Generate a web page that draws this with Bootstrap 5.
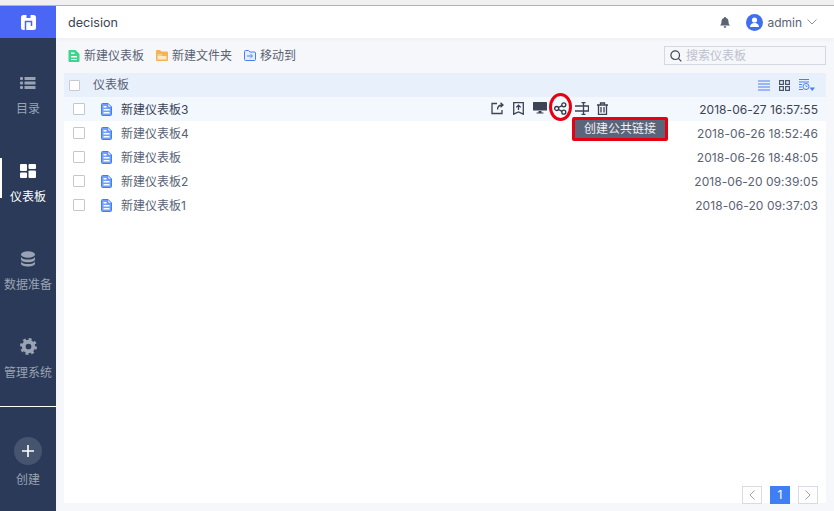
<!DOCTYPE html>
<html lang="zh">
<head>
<meta charset="utf-8">
<title>decision</title>
<link href="https://cdn.jsdelivr.net/npm/bootstrap@5.3.0/dist/css/bootstrap.min.css" rel="stylesheet">
<style>
html,body{height:100%;overflow:hidden}
body{background:#f5f7fa;font-family:Inter,"Noto Sans CJK SC",sans-serif;font-size:12px;color:#4a5468}
.chrome{height:6px;background:#f0f0f0;border-bottom:1px solid #b4b4b4}
.shell{height:505px}
.side{width:56px;background:#2b3a58;color:#9aa3b3}
.logo{height:32px;background:#4a66f5}
.nav-it{height:88px;padding-top:38px;position:relative;font-size:12px;line-height:18px}
.nav-it svg{display:block;margin-bottom:10px}
.nav-it svg.tall-a{margin-top:-1px;margin-bottom:9px}
.nav-it svg.tall-b{margin-top:-2px;margin-bottom:9px}
.nav-it.on{color:#fff}
.nav-it.on::before{content:"";position:absolute;left:0;top:32px;width:2px;height:40px;background:#fff}
.side-line{border-top:1px solid #fff;margin-top:16px}
.create{padding-top:30px;line-height:18px}
.plus{width:28px;height:28px;border-radius:50%;background:#47546f;margin-bottom:6px}
.topbar{height:32px;background:#fff;padding:0 17px 0 12px;box-shadow:0 1px 4px rgba(60,80,120,.06)}
.app-name{font-size:12.6px;color:#3c4354;margin-top:2px}
.admin{color:#5a6274;font-size:12px;margin-right:5px;margin-top:1px}
.avatar{width:17px;height:17px;border-radius:50%;background:#3f6ff0}
.tools{height:35px;padding:0 8px 0 12px;gap:12px}
.tool{color:#5a6274;font-size:12px}
.search{width:162px;height:19px;border:1px solid #d4d8e2;padding-left:5px;color:#bcc2ce;font-size:12px;line-height:17px}
.panel{margin:0 8px;height:430px;background:#fff;position:relative}
.head{height:24px;background:#e8f0fb;color:#5a6274;padding:0 11px 0 5px}
.head-gap{margin-right:9px}
.box{width:11px;height:11px;border:1px solid #c6cad3;background:#fff;flex:none;border-radius:1px}
.box-head{margin-right:13px}
.box-l{width:12px;height:12px;border-color:#c3c7d0;margin-left:9px}
.rowi{height:24px;color:#5a6274}
.rowi.hov{background:#f3f7fe;color:#3c4354}
.doc{margin-left:16px;margin-right:9px;flex:none}
.lbl{margin-top:2px}
.stamp{margin-left:auto;margin-right:8px;margin-top:2px;color:#5a6274;font-size:12px;letter-spacing:.05px;white-space:nowrap}
.hov .stamp{color:#3c4354}
.acts{position:absolute;left:423px;top:23px;height:24px}
.act{width:21px}
.ring{position:absolute;left:485px;top:20px;width:23px;height:28px;border:3px solid #e60012;border-radius:50%;pointer-events:none}
.tipbox{position:absolute;left:508px;top:44px;width:96px;height:24px;border:3px solid #e60012;border-radius:2px;background:#fff}
.tipin{background:#5b6579;color:#eef0f4;height:100%;text-align:center;font-size:12px;line-height:18px}
.pager{position:absolute;right:8px;bottom:-1px;gap:8px}
.pg{width:20px;height:18px;border:1px solid #d8dbe3;background:#fff;color:#9aa1b0}
.pg.cur{background:#3f7ff5;border-color:#3f7ff5;color:#fff;font-size:12px;line-height:1}
</style>
</head>
<body>
<div class="chrome"></div>
<div class="shell d-flex">
  <aside class="side d-flex flex-column flex-shrink-0">
    <div class="logo d-flex align-items-center justify-content-center">
      <svg width="15" height="15" viewBox="0 0 15 15"><rect width="15" height="15" rx="2.500" fill="#fff"/><path d="M5.500 0h4v3h-4z" fill="#4a66f5"/><path d="M4.500 15V6.500h6V11" fill="none" stroke="#4a66f5" stroke-width="1.500"/></svg>
    </div>
    <div class="nav-it d-flex flex-column align-items-center">
      <svg width="16" height="14" viewBox="0 0 16 14" fill="#9aa3b3"><rect x="0" y="1" width="3" height="3" rx="1"/><rect x="4.500" y="1" width="11" height="3" rx=".5"/><rect x="0" y="5.500" width="3" height="3" rx="1"/><rect x="4.500" y="5.500" width="11" height="3" rx=".5"/><rect x="0" y="10" width="3" height="3" rx="1"/><rect x="4.500" y="10" width="11" height="3" rx=".5"/></svg>
      <span>目录</span>
    </div>
    <div class="nav-it on d-flex flex-column align-items-center">
      <svg width="16" height="14" viewBox="0 0 16 14" fill="#fff"><rect x="0" y="0" width="7" height="7" rx="1"/><rect x="8.500" y="0" width="7.500" height="5" rx="1"/><rect x="0" y="8.500" width="7" height="5.500" rx="1"/><rect x="8.500" y="6.500" width="7.500" height="7.500" rx="1"/></svg>
      <span>仪表板</span>
    </div>
    <div class="nav-it d-flex flex-column align-items-center">
      <svg class="tall-a" width="16" height="16" viewBox="0 0 16 16" fill="#9aa3b3"><ellipse cx="8" cy="3.500" rx="7" ry="3.200"/><path d="M1 6c1 1.800 3.500 2.600 7 2.600S14 7.800 15 6v2.200c0 1.800-3 3-7 3s-7-1.200-7-3z"/><path d="M1 10.500c1 1.800 3.500 2.600 7 2.600s6-.8 7-2.600v2c0 1.800-3 3-7 3s-7-1.200-7-3z"/></svg>
      <span>数据准备</span>
    </div>
    <div class="nav-it d-flex flex-column align-items-center">
      <svg class="tall-b" width="17" height="17" viewBox="0 0 16 16" fill="none" stroke="#9aa3b3"><circle cx="8" cy="8" r="4.500" stroke-width="3.600"/><circle cx="8" cy="8" r="6.500" stroke-width="3" stroke-dasharray="2.600 2.500"/></svg>
      <span>管理系统</span>
    </div>
    <div class="side-line"></div>
    <div class="create d-flex flex-column align-items-center">
      <div class="plus d-flex align-items-center justify-content-center">
        <svg width="12" height="12" viewBox="0 0 12 12" stroke="#fff" stroke-width="1.600"><path d="M6 0v12M0 6h12"/></svg>
      </div>
      <span>创建</span>
    </div>
  </aside>
  <main class="flex-grow-1 d-flex flex-column">
    <header class="topbar d-flex align-items-center">
      <span class="app-name">decision</span>
      <svg class="ms-auto me-3" width="10" height="11" viewBox="0 0 10 11" fill="#5a6274"><path d="M5 0c.6 0 1 .4 1 1 1.700.4 2.500 1.800 2.500 3.500 0 2 .6 3 1.500 4H0c.9-1 1.500-2 1.500-4C1.500 2.800 2.300 1.400 4 1c0-.6.4-1 1-1zM3.700 9.300h2.600C6.200 10.200 5.700 11 5 11s-1.200-.8-1.300-1.700z"/></svg>
      <div class="avatar d-flex align-items-center justify-content-center me-1">
        <svg width="9" height="10" viewBox="0 0 9 10" fill="#fff"><circle cx="4.500" cy="3" r="2.600"/><path d="M0 10c0-2.800 2-4 4.500-4S9 7.200 9 10z"/></svg>
      </div>
      <span class="admin">admin</span>
      <svg width="10" height="6" viewBox="0 0 10 6" fill="none" stroke="#8a92a2"><path d="M.5.500 5 5 9.500.5"/></svg>
    </header>
    <div class="tools d-flex align-items-center">
      <span class="tool d-flex align-items-center">
        <svg class="me-1" width="12" height="12" viewBox="0 0 11 12"><path d="M0 1a1 1 0 0 1 1-1h6l4 4v7a1 1 0 0 1-1 1H1a1 1 0 0 1-1-1z" fill="#3fd48c"/><path d="M2.500 6h6v1.500h-6zM2.500 9h6v1h-6zM2.500 2.500h3.500V4H2.500z" fill="#fff"/></svg>新建仪表板</span>
      <span class="tool d-flex align-items-center">
        <svg class="me-1" width="12" height="11" viewBox="0 0 12 11"><path d="M0 1a1 1 0 0 1 1-1h3l1.500 1.500H11a1 1 0 0 1 1 1V10a1 1 0 0 1-1 1H1a1 1 0 0 1-1-1z" fill="#f5b356"/><path d="M1.500 4.500h5l-1 1h-4zM1.500 6h9v3.500h-9z" fill="#fde8c8"/></svg>新建文件夹</span>
      <span class="tool d-flex align-items-center">
        <svg class="me-1" width="12" height="11" viewBox="0 0 12 11"><path d="M.5 1.500A1 1 0 0 1 1.500.5h3L6 2h4.500a1 1 0 0 1 1 1v6.500a1 1 0 0 1-1 1h-9a1 1 0 0 1-1-1z" fill="#e4edfd" stroke="#4a80ee"/><path d="M3 6h5M6.500 4.200 8.500 6l-2 1.800" fill="none" stroke="#4a80ee"/></svg>移动到</span>
      <div class="search ms-auto d-flex align-items-center">
        <svg class="me-1 flex-shrink-0" width="12" height="12" viewBox="0 0 12 12" fill="none" stroke="#3f4757" stroke-width="1.200"><circle cx="5.200" cy="5.200" r="4.300"/><path d="m8.300 8.300 3 3"/></svg>
        <span>搜索仪表板</span>
      </div>
    </div>
    <section class="panel">
      <div class="head d-flex align-items-center">
        <span class="box box-head"></span>
        <span>仪表板</span>
        <svg class="ms-auto head-gap" width="12" height="11" viewBox="0 0 12 11" stroke="#4a80ee"><path d="M0 1h12M0 4h12M0 7h12M0 10h12"/></svg>
        <svg class="head-gap" width="11" height="11" viewBox="0 0 11 11" fill="none" stroke="#4a5468" stroke-width="1.200"><rect x=".6" y=".6" width="3.800" height="3.800"/><rect x="6.600" y=".6" width="3.800" height="3.800"/><rect x=".6" y="6.600" width="3.800" height="3.800"/><rect x="6.600" y="6.600" width="3.800" height="3.800"/></svg>
        <svg width="16" height="13" viewBox="0 0 16 13"><path d="M0 .5h10M0 3h10M0 5.500h3M0 8h3M0 10.500h4" stroke="#4a80ee"/><circle cx="7" cy="7.500" r="3" fill="#e8f0fb" stroke="#4a80ee"/><path d="M7 6v1.500h1.500" fill="none" stroke="#4a80ee" stroke-width=".8"/><path d="M10.500 8.500H16L13.250 12z" fill="#4a80ee"/></svg>
      </div>
      <div class="rowi hov d-flex align-items-center">
        <span class="box box-l"></span>
        <svg class="doc" width="11" height="13" viewBox="0 0 11 13"><use href="#docic"/></svg>
        <span class="lbl">新建仪表板3</span>
        <span class="stamp">2018-06-27 16:57:55</span>
      </div>
      <div class="rowi d-flex align-items-center"><span class="box box-l"></span><svg class="doc" width="11" height="13" viewBox="0 0 11 13"><use href="#docic"/></svg><span class="lbl">新建仪表板4</span><span class="stamp">2018-06-26 18:52:46</span></div>
      <div class="rowi d-flex align-items-center"><span class="box box-l"></span><svg class="doc" width="11" height="13" viewBox="0 0 11 13"><use href="#docic"/></svg><span class="lbl">新建仪表板</span><span class="stamp">2018-06-26 18:48:05</span></div>
      <div class="rowi d-flex align-items-center"><span class="box box-l"></span><svg class="doc" width="11" height="13" viewBox="0 0 11 13"><use href="#docic"/></svg><span class="lbl">新建仪表板2</span><span class="stamp">2018-06-20 09:39:05</span></div>
      <div class="rowi d-flex align-items-center"><span class="box box-l"></span><svg class="doc" width="11" height="13" viewBox="0 0 11 13"><use href="#docic"/></svg><span class="lbl">新建仪表板1</span><span class="stamp">2018-06-20 09:37:03</span></div>
      <div class="acts d-flex align-items-center">
        <div class="act d-flex justify-content-center"><svg width="13" height="13" viewBox="0 0 13 13" fill="none" stroke="#3c4354" stroke-width="1.300"><path d="M6 1.500H1v10h10V8M6.500 7.500c0-3 1.500-4.500 5-4.500M9.500 .8 12 3 9.500 5.200"/></svg></div>
        <div class="act d-flex justify-content-center"><svg width="11" height="13" viewBox="0 0 11 13" fill="none" stroke="#3c4354" stroke-width="1.300"><path d="M.7.700h9.600v11.500L5.500 10 .7 12.200zM5.500 8V3.200M3.300 5.400l2.200-2.200 2.200 2.200"/></svg></div>
        <div class="act d-flex justify-content-center"><svg width="14" height="12" viewBox="0 0 14 12" fill="#3c4354"><rect x="0" y="0" width="14" height="8.500" rx=".5"/><path d="M5.500 9h3v1.500h2v1h-7v-1h2z"/></svg></div>
        <div class="act d-flex justify-content-center"><svg width="13" height="13" viewBox="0 0 13 13" fill="none" stroke="#2f3646" stroke-width="1.300"><circle cx="2.700" cy="6.500" r="2"/><circle cx="9.800" cy="2.800" r="2"/><circle cx="9.800" cy="10.200" r="2"/><path d="m4.500 5.500 3.500-1.800M4.500 7.500l3.500 1.800"/></svg></div>
        <div class="act d-flex justify-content-center"><svg width="14" height="13" viewBox="0 0 14 13" fill="none" stroke="#3c4354" stroke-width="1.300"><path d="M0 4h8.500M0 9h8.500M8.500 .7v11.600M6.500.7h4M6.500 12.300h4M8.500 4h5v5h-5"/></svg></div>
        <div class="act d-flex justify-content-center"><svg width="11" height="13" viewBox="0 0 11 13" fill="none" stroke="#3c4354" stroke-width="1.300"><path d="M0 3h11M3.500 3V1h4v2M1.500 3v9.300h8V3M4 5v5.500M7 5v5.500"/></svg></div>
      </div>
      <div class="ring"></div>
      <div class="tipbox"><div class="tipin">创建公共链接</div></div>
      <div class="pager d-flex">
        <div class="pg d-flex align-items-center justify-content-center"><svg width="6" height="10" viewBox="0 0 6 10" fill="none" stroke="#9aa1b0"><path d="M5.500.5 1 5l4.500 4.500"/></svg></div>
        <div class="pg cur d-flex align-items-center justify-content-center">1</div>
        <div class="pg d-flex align-items-center justify-content-center"><svg width="6" height="10" viewBox="0 0 6 10" fill="none" stroke="#9aa1b0"><path d="M.5.500 5 5 .5 9.500"/></svg></div>
      </div>
    </section>
  </main>
</div>
<svg width="0" height="0" class="position-absolute"><defs><g id="docic"><path d="M.5 1.500a1 1 0 0 1 1-1h5.500l3.500 3.500v7.500a1 1 0 0 1-1 1h-8a1 1 0 0 1-1-1z" fill="#6fa1fa" stroke="#3f7ff5"/><path d="M7 .5v3.500h3.500z" fill="#fff" stroke="#3f7ff5" stroke-width=".6"/><path d="M2.500 3h3v1.500h-3zM2.500 6h6v1.500h-6zM2.500 9h6v1.500h-6z" fill="#fff"/></g></defs></svg>
</body>
</html>
